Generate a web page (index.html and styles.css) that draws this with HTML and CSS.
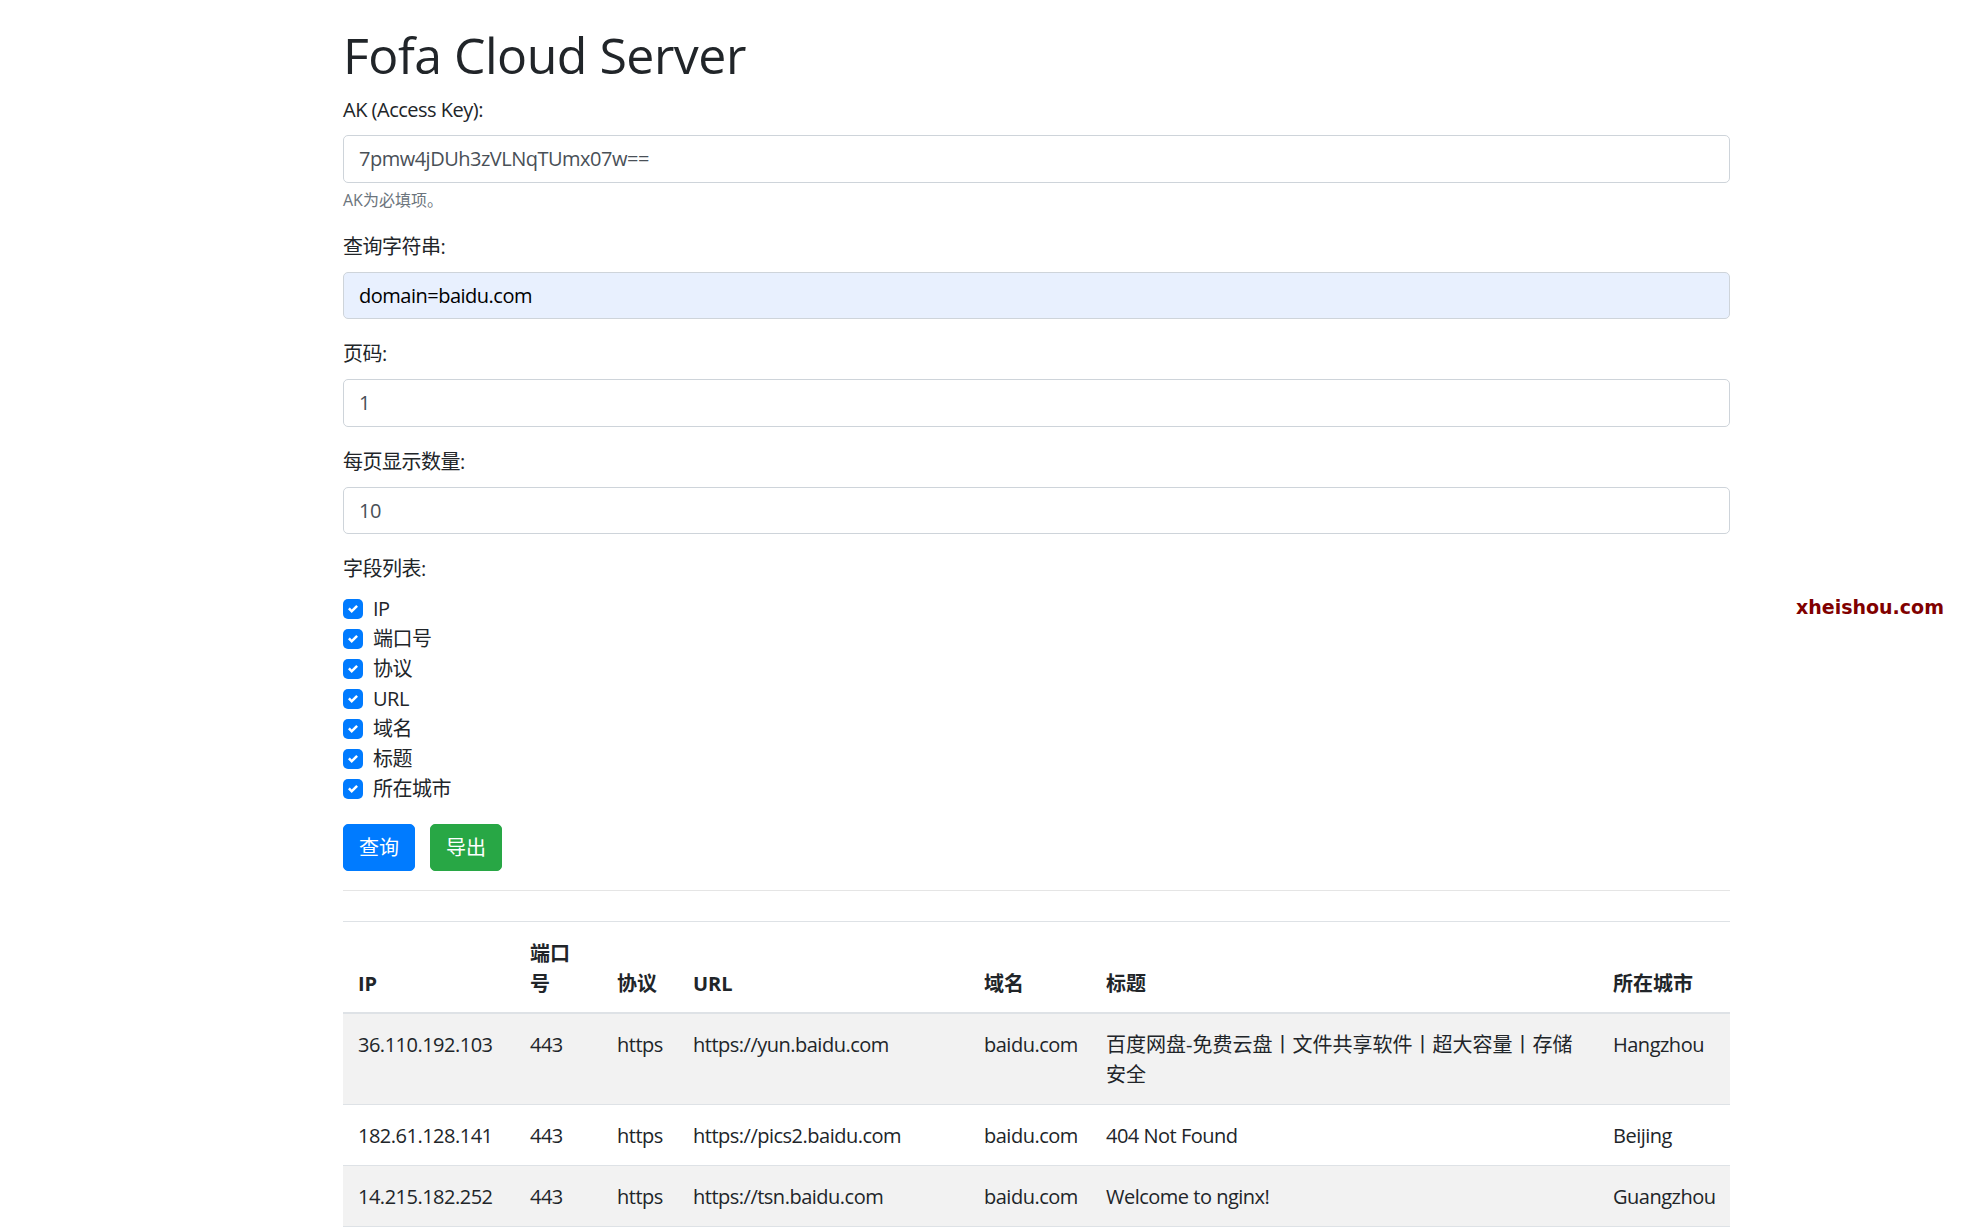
FILE: index.html
```html
<!DOCTYPE html>
<html lang="zh-CN">
<head>
<meta charset="utf-8">
<title>Fofa Cloud Server</title>
<link rel="stylesheet" href="styles.css">
</head>
<body>
<div class="watermark">xheishou.com</div>
<div class="container">
  <h1 class="title">Fofa Cloud Server</h1>
  <form class="query-form">
    <div class="form-group">
      <label class="lbl">AK (Access Key):</label>
      <input class="form-control" type="text" value="7pmw4jDUh3zVLNqTUmx07w==">
      <small class="form-text">AK为必填项。</small>
    </div>
    <div class="form-group">
      <label class="lbl">查询字符串:</label>
      <input class="form-control autofill" type="text" value="domain=baidu.com">
    </div>
    <div class="form-group">
      <label class="lbl">页码:</label>
      <input class="form-control" type="text" value="1">
    </div>
    <div class="form-group">
      <label class="lbl">每页显示数量:</label>
      <input class="form-control" type="text" value="10">
    </div>
    <div class="form-group">
      <label class="lbl">字段列表:</label>
      <div class="checks">
        <div class="check"><span class="box"><svg viewBox="0 0 8 8"><path fill="#fff" d="M6.564.75l-3.59 3.612-1.538-1.55L0 4.26l2.974 2.99L8 2.193z"/></svg></span><span>IP</span></div>
        <div class="check"><span class="box"><svg viewBox="0 0 8 8"><path fill="#fff" d="M6.564.75l-3.59 3.612-1.538-1.55L0 4.26l2.974 2.99L8 2.193z"/></svg></span><span>端口号</span></div>
        <div class="check"><span class="box"><svg viewBox="0 0 8 8"><path fill="#fff" d="M6.564.75l-3.59 3.612-1.538-1.55L0 4.26l2.974 2.99L8 2.193z"/></svg></span><span>协议</span></div>
        <div class="check"><span class="box"><svg viewBox="0 0 8 8"><path fill="#fff" d="M6.564.75l-3.59 3.612-1.538-1.55L0 4.26l2.974 2.99L8 2.193z"/></svg></span><span>URL</span></div>
        <div class="check"><span class="box"><svg viewBox="0 0 8 8"><path fill="#fff" d="M6.564.75l-3.59 3.612-1.538-1.55L0 4.26l2.974 2.99L8 2.193z"/></svg></span><span>域名</span></div>
        <div class="check"><span class="box"><svg viewBox="0 0 8 8"><path fill="#fff" d="M6.564.75l-3.59 3.612-1.538-1.55L0 4.26l2.974 2.99L8 2.193z"/></svg></span><span>标题</span></div>
        <div class="check"><span class="box"><svg viewBox="0 0 8 8"><path fill="#fff" d="M6.564.75l-3.59 3.612-1.538-1.55L0 4.26l2.974 2.99L8 2.193z"/></svg></span><span>所在城市</span></div>
      </div>
    </div>
    <div class="actions">
      <button type="button" class="btn btn-primary">查询</button>
      <button type="button" class="btn btn-success">导出</button>
    </div>
  </form>
  <hr class="sep">
  <table class="results">
    <colgroup>
      <col class="c-ip"><col class="c-port"><col class="c-proto"><col class="c-url"><col class="c-domain"><col class="c-title"><col class="c-city">
    </colgroup>
    <thead>
      <tr><th>IP</th><th>端口号</th><th>协议</th><th>URL</th><th>域名</th><th>标题</th><th>所在城市</th></tr>
    </thead>
    <tbody>
      <tr><td>36.110.192.103</td><td>443</td><td>https</td><td>https://yun.baidu.com</td><td>baidu.com</td><td class="cjk">百度网盘-免费云盘丨文件共享软件丨超大容量丨存储安全</td><td>Hangzhou</td></tr>
      <tr><td>182.61.128.141</td><td>443</td><td>https</td><td>https://pics2.baidu.com</td><td>baidu.com</td><td>404 Not Found</td><td>Beijing</td></tr>
      <tr><td>14.215.182.252</td><td>443</td><td>https</td><td>https://tsn.baidu.com</td><td>baidu.com</td><td>Welcome to nginx!</td><td>Guangzhou</td></tr>
    </tbody>
  </table>
</div>
</body>
</html>
```
FILE: styles.css
```css
* { box-sizing: border-box; }

body {
  margin: 0;
  font-family: "Open Sans", "Noto Sans CJK SC", sans-serif;
  font-size: 20px;
  line-height: 30px;
  letter-spacing: -0.5px;
  color: #212529;
  background: #fff;
}

.container {
  width: 1387px;
  margin-left: 343px;
  padding-top: 25px;
}

.title {
  font-size: 50px;
  font-weight: 500;
  line-height: 60px;
  letter-spacing: -0.5px;
  margin: 0 0 10px;
}

.form-group { margin-bottom: 20px; }

.lbl {
  display: inline-block;
  height: 30px;
  margin-bottom: 10px;
}

.form-control {
  display: block;
  width: 100%;
  height: 47.5px;
  padding: 7.5px 15px;
  font: inherit;
  letter-spacing: inherit;
  line-height: 30px;
  color: #495057;
  background: #fff;
  border: 1.25px solid #ced4da;
  border-radius: 5px;
  outline: none;
}

.form-control.autofill {
  background: #e8f0fe;
  color: #000;
}

.form-text {
  display: block;
  margin-top: 5px;
  font-size: 16px;
  line-height: 24px;
  letter-spacing: 0;
  color: #6c757d;
}

.check {
  display: flex;
  align-items: center;
  height: 30px;
}

.box {
  width: 20px;
  height: 20px;
  border-radius: 5px;
  background: #007bff;
  display: flex;
  align-items: center;
  justify-content: center;
  margin-right: 10px;
  flex: none;
}

.box svg { width: 10px; height: 10px; display: block; }

.actions {
  display: flex;
  gap: 15px;
}

.btn {
  font: inherit;
  letter-spacing: 0;
  line-height: 30px;
  padding: 7.5px 15px;
  border: 1.25px solid transparent;
  border-radius: 5px;
  color: #fff;
  cursor: pointer;
}

.btn-primary { background: #007bff; border-color: #007bff; }
.btn-success { background: #28a745; border-color: #28a745; }

.sep {
  margin: 19px 0 20px;
  border: 0;
  border-top: 1.25px solid rgba(0, 0, 0, 0.1);
}

.results {
  width: 100%;
  margin-top: 30px;
  border-collapse: collapse;
  table-layout: fixed;
  border-bottom: 1.25px solid #dee2e6;
}

.c-ip { width: 172px; }
.c-port { width: 87px; }
.c-proto { width: 76px; }
.c-url { width: 291px; }
.c-domain { width: 122px; }
.c-title { width: 507px; }
.c-city { width: 132px; }

.results th,
.results td {
  padding: 16px 15px 14px;
  text-align: left;
  vertical-align: top;
  border-top: 1.25px solid #dee2e6;
}

.results thead th {
  padding: 17px 15px 13px;
  vertical-align: bottom;
  font-weight: 700;
  letter-spacing: 0;
  border-bottom: 2.5px solid #dee2e6;
}

.results td.cjk { letter-spacing: 0; }

.results tbody tr:nth-child(odd) { background: rgba(0, 0, 0, 0.05); }

.watermark {
  position: absolute;
  left: 1796px;
  top: 595px;
  font-family: "DejaVu Sans", sans-serif;
  font-weight: 700;
  font-size: 19px;
  line-height: 24px;
  letter-spacing: 0;
  color: #800000;
}
```
